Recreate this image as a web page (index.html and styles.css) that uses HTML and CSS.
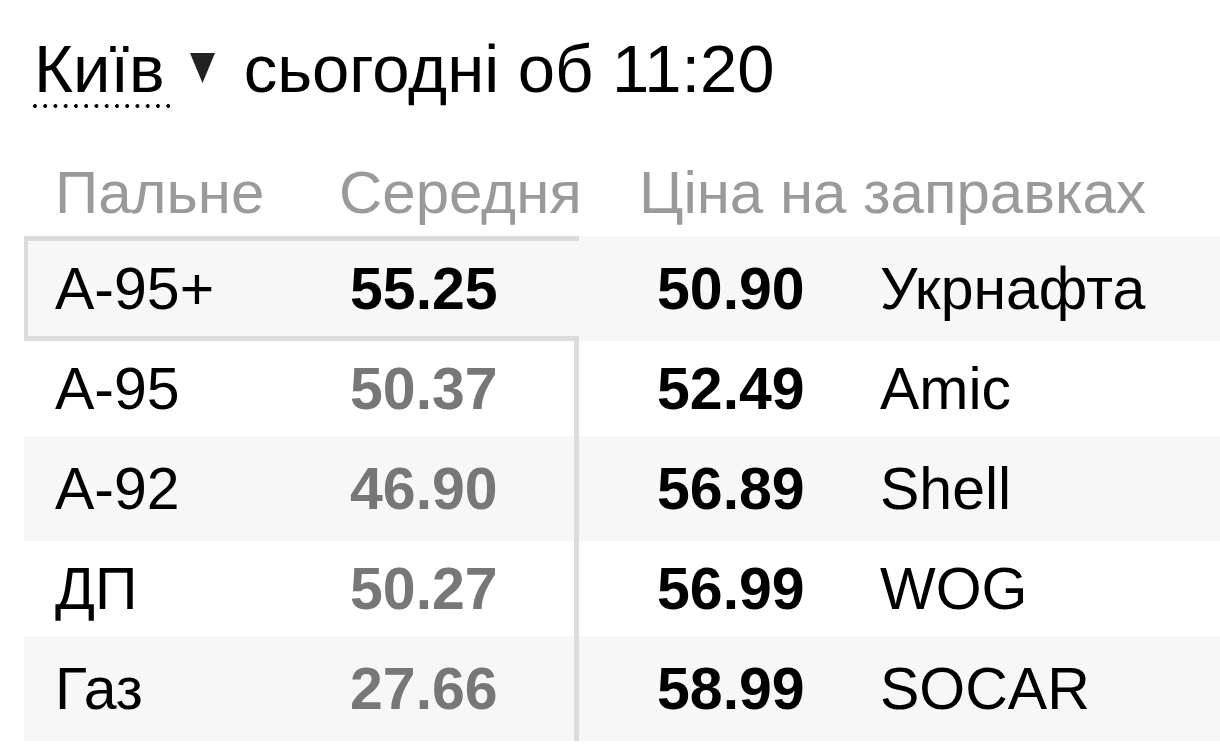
FILE: index.html
```html
<!DOCTYPE html>
<html lang="uk">
<head>
<meta charset="utf-8">
<title>Ціни на пальне</title>
<link rel="stylesheet" href="styles.css">
</head>
<body>
<div class="widget">
  <div class="title"><span class="city">Київ</span><svg class="caret" width="25" height="30" viewBox="0 0 25 30"><polygon points="0,0 25,0 12.5,30" fill="#222"/></svg><span class="when">сьогодні об 11:20</span></div>
  <div class="head"><span class="h-fuel">Пальне</span><span class="h-avg">Середня</span><span class="h-st">Ціна на заправках</span></div>
  <div class="table">
    <div class="row odd active">
      <div class="tab"><span class="fuel">А-95+</span><span class="avg">55.25</span></div>
      <div class="station"><span class="price">50.90</span><span class="name">Укрнафта</span></div>
    </div>
    <div class="row">
      <div class="tab"><span class="fuel">А-95</span><span class="avg">50.37</span></div>
      <div class="station"><span class="price">52.49</span><span class="name">Amic</span></div>
    </div>
    <div class="row odd">
      <div class="tab"><span class="fuel">А-92</span><span class="avg">46.90</span></div>
      <div class="station"><span class="price">56.89</span><span class="name">Shell</span></div>
    </div>
    <div class="row">
      <div class="tab"><span class="fuel">ДП</span><span class="avg">50.27</span></div>
      <div class="station"><span class="price">56.99</span><span class="name">WOG</span></div>
    </div>
    <div class="row odd">
      <div class="tab"><span class="fuel">Газ</span><span class="avg">27.66</span></div>
      <div class="station"><span class="price">58.99</span><span class="name">SOCAR</span></div>
    </div>
  </div>
</div>
</body>
</html>
```

FILE: styles.css
```css
html, body {
  margin: 0;
  padding: 0;
  background: #fff;
}
body {
  font-family: "Liberation Sans", Arial, sans-serif;
  color: #000;
  overflow: hidden;
}
.title {
  margin-top: 31px;
  padding-left: 34px;
  font-size: 67px;
  line-height: 76px;
  height: 76px;
  white-space: nowrap;
}
.city {
  position: relative;
}
.city::after {
  content: "";
  position: absolute;
  left: -1px;
  width: 138px;
  top: 73px;
  height: 4px;
  background-image: radial-gradient(circle at 2px 2px, #000 1.6px, transparent 2.2px);
  background-size: 10.25px 4px;
  background-repeat: repeat-x;
}
.caret {
  display: inline-block;
  vertical-align: 9px;
  margin-left: 25px;
  margin-right: 29px;
}
.head {
  margin-top: 51px;
  height: 70px;
  font-size: 60px;
  line-height: 70px;
  color: #9a9a9a;
  display: flex;
  padding-left: 55px;
  white-space: nowrap;
}
.h-fuel { width: 284px; }
.h-avg { width: 300px; }
.table {
  margin: 8px 0 0 24px;
  display: flex;
  flex-direction: column;
  font-size: 59px;
}
.row {
  display: flex;
  height: 95px;
}
.row.odd {
  height: 105px;
  background: #f7f7f7;
}
.tab {
  width: 555px;
  flex: none;
  box-sizing: border-box;
  display: flex;
  align-items: center;
  padding-left: 31px;
  border-right: 5px solid #dcdcdc;
}
.row.active .tab {
  border: 5px solid #dcdcdc;
  border-left-width: 4px;
  border-right: 0;
  padding-left: 27px;
}
.fuel { width: 295px; }
.avg {
  font-weight: bold;
  color: #777;
}
.row.active .avg { color: #000; }
.station {
  flex: 1;
  display: flex;
  align-items: center;
  padding-left: 78px;
  white-space: nowrap;
}
.price {
  width: 223px;
  font-weight: bold;
}
```
